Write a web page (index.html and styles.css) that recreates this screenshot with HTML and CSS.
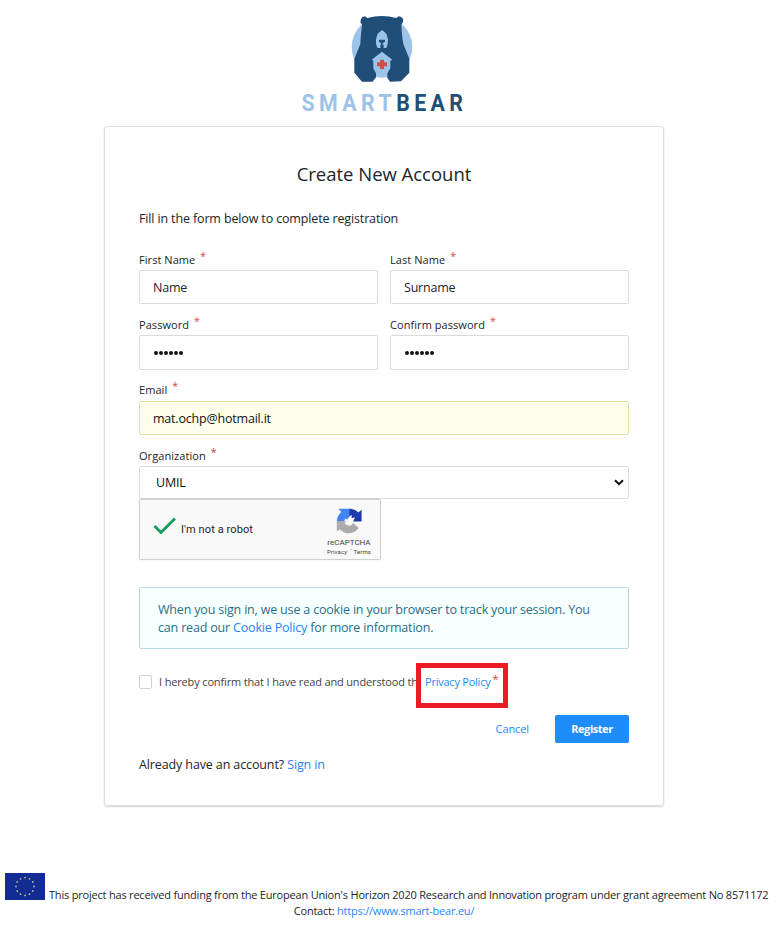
FILE: index.html
```html
<!DOCTYPE html>
<html lang="en">
<head>
<meta charset="utf-8">
<title>Create New Account</title>
<link rel="stylesheet" href="styles.css">
</head>
<body>
<div class="page">
  <header class="brand">
    <svg class="bear" width="62" height="68" viewBox="0 0 186 204" aria-hidden="true">
      <circle cx="93" cy="96" r="91" fill="#9ec3e8"/>
      <path fill="#1f4e79" d="M30 12 L34 6 L42 4 L49 9 Q93-3 136 9 L143 4 L151 6 L156 12 V22 L151 29 Q152 49 154 68 L157 87 L175 132 V173 L150 199 L117 200 L108 187 L109 180 H75 V187 L65 200 H33 L10 173 V132 L28 87 L29 68 L33 29 L28 22Z"/>
      <path fill="#9ec3e8" d="M93 45 L106 56 L111 73 L110 88 L106 99 H98 V89 H88 V99 H80 L75 88 L75 73 L80 56Z M93 110 L124 134 L118 137 V160 L109 175 V185 Q93 190 75 185 V175 L67 160 V137 L62 134Z"/>
      <path fill="#1f4e79" d="M84 74 H102 V80 L95 85 V94 H90 V85 L84 80Z"/>
      <path fill="#d64b48" d="M87 134 H99 V142 H108 V154 H99 V162 H87 V154 H78 V142 H87Z"/>
    </svg>
    <div class="wordmark"><span class="smart">SMART</span>BEAR</div>
  </header>

  <main class="card">
    <h1>Create New Account</h1>
    <p class="intro">Fill in the form below to complete registration</p>
    <form>
      <div class="row">
        <div class="field"><div class="label"><span>First Name</span><i>*</i></div><div class="input"><span>Name</span></div></div>
        <div class="field"><div class="label"><span>Last Name</span><i>*</i></div><div class="input"><span>Surname</span></div></div>
      </div>
      <div class="row second">
        <div class="field"><div class="label"><span>Password</span><i>*</i></div><div class="input dots"><b></b><b></b><b></b><b></b><b></b><b></b></div></div>
        <div class="field"><div class="label"><span>Confirm password</span><i>*</i></div><div class="input dots"><b></b><b></b><b></b><b></b><b></b><b></b></div></div>
      </div>
      <div class="field email"><div class="label"><span>Email</span><i>*</i></div><div class="input filled"><span>mat.ochp@hotmail.it</span></div></div>
      <div class="field organization"><div class="label"><span>Organization</span><i>*</i></div>
        <div class="input select"><span>UMIL</span>
          <svg width="10" height="7" viewBox="0 0 10 7"><path d="M1 1.2 5 5.2 9 1.2" fill="none" stroke="#111" stroke-width="2"/></svg>
        </div>
      </div>
      <div class="captcha">
        <svg class="tick" width="24" height="18" viewBox="0 0 24 18"><path d="M1.5 9 8 15.5 22 1.5" fill="none" stroke="#129d58" stroke-width="2.8"/></svg>
        <span class="robot">I'm not a robot</span>
        <div class="captcha-brand">
          <svg width="26" height="26" viewBox="0 0 64 64">
            <path fill="#1c3aa9" d="M63 33V4l-8 7A32 32 0 0 0 32 2v19l7-4-1 8 9-2-5 10z"/>
            <path fill="#4285f4" d="M33 2H6l7 8A32 32 0 0 0 2 33h18l3-7 5 2 5-7z"/>
            <path fill="#ababab" d="M2 32v26l7-6c13 15 36 13 47-3L42 37c-2 5-7 7-11 6-7-1-9-5-10-6l5-4z"/>
          </svg>
          <span class="recaptcha">reCAPTCHA</span>
          <span class="terms">Privacy&nbsp; <sup>-</sup> Terms</span>
        </div>
      </div>
      <div class="notice">
        <div>When you sign in, we use a cookie in your browser to track your session. You</div>
        <div>can read our <a>Cookie Policy</a> for more information.</div>
      </div>
      <div class="consent">
        <span class="box"></span><span class="agree">I hereby confirm that I have read and understood the</span>
        <div class="highlight"><a>Privacy Policy</a><i>*</i></div>
      </div>
      <div class="actions"><a class="cancel">Cancel</a><button type="button">Register</button></div>
      <p class="signin">Already have an account? <a>Sign in</a></p>
    </form>
  </main>

  <footer>
    <div class="funding">
      <svg width="40" height="27" viewBox="0 0 40 27">
        <path fill="#122c94" d="M0 0h40v27H0z"/>
        <g fill="#aeb59a"><circle cx="20" cy="4.6" r=".9"/><circle cx="24.5" cy="5.8" r=".9"/><circle cx="27.8" cy="9" r=".9"/><circle cx="29" cy="13.5" r=".9"/><circle cx="27.8" cy="18" r=".9"/><circle cx="24.5" cy="21.2" r=".9"/><circle cx="20" cy="22.4" r=".9"/><circle cx="15.5" cy="21.2" r=".9"/><circle cx="12.2" cy="18" r=".9"/><circle cx="11" cy="13.5" r=".9"/><circle cx="12.2" cy="9" r=".9"/><circle cx="15.5" cy="5.8" r=".9"/></g>
      </svg>
      <span class="grant">This project has received funding from the European Union's Horizon 2020 Research and Innovation program under grant agreement No 8571172</span>
    </div>
    <div class="contact">Contact: <a>https://www.smart-bear.eu/</a></div>
  </footer>
</div>
</body>
</html>
```
FILE: styles.css
```css
* { box-sizing: border-box; }
body { margin: 0; background: #fff; color: #212529; font: 12.5px/18px "Open Sans", "Noto Sans", sans-serif; }
.page { width: 768px; height: 939px; white-space: nowrap; }
svg { flex: none; }
a { color: #2684ff; }
p, h1 { margin: 0; }
i { font-style: normal; color: #d43f3a; }

.brand { height: 126px; padding-top: 15px; display: flex; flex-direction: column; align-items: center; }
.bear { display: block; margin-right: 4px; }
.wordmark { margin-top: 7px; margin-left: 1px; font: 700 24.5px/26px Roboto, sans-serif; letter-spacing: 5.1px; color: #1f4e79; transform: scaleX(.87); }
.smart { color: #9ec3e8; }

.card { width: 560px; height: 680px; margin: 0 auto; padding: 34px; border: 1px solid #dcdcdc; border-radius: 3px; box-shadow: 0 1px 2px rgba(0,0,0,.16); }
h1 { height: 28px; text-align: center; font-size: 18.5px; line-height: 26px; font-weight: 400; letter-spacing: -.02px; }
.intro { height: 18px; margin-top: 20px; line-height: 20px; letter-spacing: -.14px; }

.row { display: grid; grid-template-columns: 1fr 1fr; column-gap: 12px; margin-top: 23px; }
.row.second { margin-top: 11px; }
.label { height: 20px; font-size: 11px; line-height: 19px; letter-spacing: .06px; display: flex; gap: 5px; }
.label i { font-size: 10.5px; line-height: 12px; }
.input { height: 34px; padding: 2px 13px 0; border: 1px solid #d9dbdc; border-radius: 2px; display: flex; align-items: center; letter-spacing: -.2px; }
.second .input { height: 35px; padding-top: 1px; }
.dots { gap: 1.2px; padding-left: 13.5px; }
.dots b { width: 4px; height: 4px; border-radius: 50%; background: #111; }
.email { margin-top: 10px; }
.email .label { height: 21px; }
.filled { background: #ffffee; border-color: #e2dda0; color: #111; }
.organization { margin-top: 11px; }
.select { height: 33px; padding: 0 4px 0 16px; justify-content: space-between; color: #111; }

.captcha { width: 242px; height: 61px; padding: 0 9px 0 13px; display: flex; align-items: center; background: #f9f9f9; border: 1px solid #d0d0d0; border-radius: 2px; box-shadow: 0 0 2px rgba(0,0,0,.1); }
.tick { margin-top: -7px; }
.robot { margin: 0 0 0 4px; font: 11px/14px Roboto, sans-serif; letter-spacing: .1px; }
.captcha-brand { margin-left: auto; align-self: stretch; padding-top: 8px; display: flex; flex-direction: column; align-items: center; font-family: Roboto, sans-serif; color: #444; }
.recaptcha { margin-top: 4px; font-size: 8px; line-height: 9px; }
.terms { font-size: 6px; line-height: 10px; letter-spacing: .13px; }
.terms sup { line-height: 0; }

.notice { height: 62px; margin-top: 27px; padding: 13px 18px 11px; border: 1px solid #b4dce3; border-radius: 2px; background: #f8ffff; color: #276f86; letter-spacing: -.18px; }
.consent { position: relative; height: 14px; margin-top: 26px; display: flex; align-items: center; font-size: 11px; color: #444; }
.agree { letter-spacing: -.15px; }
.box { width: 13px; height: 14px; margin-right: 7px; border: 1px solid #d0d0d2; border-radius: 2px; }
.highlight { position: absolute; left: 277px; top: -12px; width: 92px; height: 45px; padding: 4px 0 0 4px; border: 5px solid #ed1c24; background: #fff; display: flex; gap: 2px; line-height: 19px; letter-spacing: -.23px; }
.highlight i { line-height: 14px; }
.highlight a { color: #1e88f7; }
.actions { display: flex; justify-content: flex-end; align-items: center; margin-top: 26px; gap: 26px; font-size: 11px; }
.cancel { letter-spacing: -.1px; }
button { width: 74px; height: 28px; padding: 0; border: 0; border-radius: 2px; background: #1e8cfa; color: #fff; font: 700 11px/28px "Open Sans", sans-serif; letter-spacing: -.45px; }
.signin { height: 18px; margin-top: 12px; line-height: 20px; letter-spacing: -.12px; }

footer { margin-top: 67px; font-size: 11px; line-height: 16px; }
.funding { height: 30px; padding-left: 5px; display: flex; gap: 4px; }
.grant { padding-top: 14px; letter-spacing: -.2px; }
.contact { text-align: center; letter-spacing: -.22px; }
```
